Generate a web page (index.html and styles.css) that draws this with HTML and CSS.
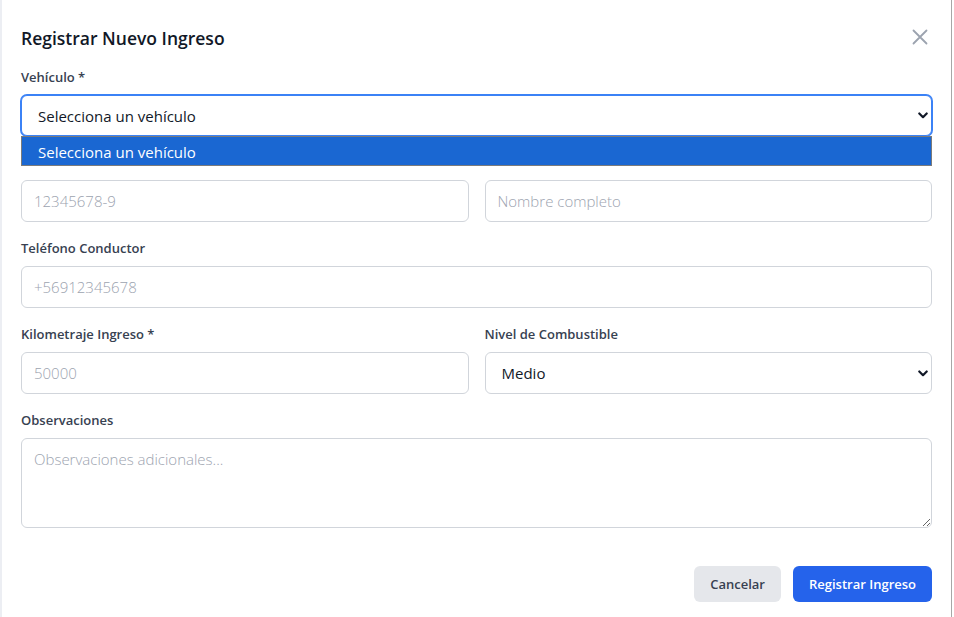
FILE: index.html
```html
<!DOCTYPE html>
<html lang="es">
<head>
<meta charset="utf-8">
<title>Registrar Nuevo Ingreso</title>
<link rel="stylesheet" href="styles.css">
</head>
<body>
<div class="modal">
  <header class="modal-header">
    <h2 class="modal-title">Registrar Nuevo Ingreso</h2>
    <button type="button" class="close-btn" aria-label="Cerrar">
      <svg width="16" height="16" viewBox="0 0 16 16" fill="none" stroke="#9ca3af" stroke-width="1.8" stroke-linecap="round"><path d="M1.5 1.5L14.5 14.5M14.5 1.5L1.5 14.5"/></svg>
    </button>
  </header>
  <form class="modal-body">
    <div class="field field-vehicle">
      <label class="label">Vehículo *</label>
      <div class="select-wrap">
        <select class="control select select-vehicle is-focused"><option>Selecciona un vehículo</option></select>
        <svg class="chevron" width="10" height="7" viewBox="0 0 10 7" fill="none" stroke="#111827" stroke-width="2.2" stroke-linecap="round" stroke-linejoin="round"><path d="M1.3 1.5L5 5.2L8.7 1.5"/></svg>
      </div>
      <div class="dropdown"><div class="dropdown-option">Selecciona un vehículo</div></div>
    </div>
    <div class="row">
      <div class="field">
        <label class="label">RUT Conductor *</label>
        <input class="control" type="text" placeholder="12345678-9">
      </div>
      <div class="field">
        <label class="label">Nombre Conductor *</label>
        <input class="control" type="text" placeholder="Nombre completo">
      </div>
    </div>
    <div class="field">
      <label class="label">Teléfono Conductor</label>
      <input class="control" type="text" placeholder="+56912345678">
    </div>
    <div class="row">
      <div class="field">
        <label class="label">Kilometraje Ingreso *</label>
        <input class="control" type="text" placeholder="50000">
      </div>
      <div class="field">
        <label class="label">Nivel de Combustible</label>
        <div class="select-wrap">
          <select class="control select"><option>Medio</option></select>
          <svg class="chevron" width="10" height="7" viewBox="0 0 10 7" fill="none" stroke="#111827" stroke-width="2.2" stroke-linecap="round" stroke-linejoin="round"><path d="M1.3 1.5L5 5.2L8.7 1.5"/></svg>
        </div>
      </div>
    </div>
    <div class="field">
      <label class="label">Observaciones</label>
      <textarea class="control textarea" placeholder="Observaciones adicionales..."></textarea>
    </div>
    <div class="modal-footer">
      <button type="button" class="btn btn-secondary">Cancelar</button>
      <button type="button" class="btn btn-primary">Registrar Ingreso</button>
    </div>
  </form>
</div>
</body>
</html>
```
FILE: styles.css
```css
* { box-sizing: border-box; }
html, body { margin: 0; padding: 0; background: #ffffff; }
body {
  font-family: "Open Sans", "Noto Sans", sans-serif;
  color: #111827;
}
.modal {
  width: 952px;
  height: 617px;
  border-left: 2px solid #eceef3;
  border-right: 1px solid #a7a7a7;
  background: #ffffff;
  padding: 0 19px;
}
.modal-header {
  display: flex;
  align-items: center;
  justify-content: space-between;
  padding-top: 24px;
}
.modal-title {
  margin: 0;
  font-size: 17.5px;
  line-height: 28px;
  font-weight: 600;
  color: #111827;
}
.close-btn {
  width: 24px;
  height: 24px;
  padding: 0;
  border: 0;
  background: transparent;
  display: flex;
  align-items: center;
  justify-content: center;
  margin-top: -2px;
}
.modal-body {
  display: flex;
  flex-direction: column;
  gap: 16px;
  padding-top: 15px;
}
.field {
  display: flex;
  flex-direction: column;
}
.field-vehicle { position: relative; }
.row {
  display: grid;
  grid-template-columns: 1fr 1fr;
  gap: 16px;
}
.label {
  font-size: 13px;
  line-height: 20px;
  font-weight: 600;
  color: #374151;
  margin-bottom: 8px;
}
.control {
  width: 100%;
  height: 42px;
  border: 1px solid #d1d5db;
  border-radius: 6px;
  padding: 0 12px;
  font-family: "Open Sans", "Noto Sans", sans-serif;
  font-size: 15px;
  color: #111827;
  background: #ffffff;
  outline: none;
}
.control::placeholder { color: #9ca3af; font-weight: 300; }
.select-wrap { position: relative; }
.select {
  appearance: none;
  -webkit-appearance: none;
  padding: 0 30px 0 16px;
}
.select-vehicle { height: 41px; }
.chevron {
  position: absolute;
  right: 4px;
  top: 18px;
  pointer-events: none;
}
.select-vehicle + .chevron { top: 17px; }
.is-focused {
  border-color: #3b82f6;
  box-shadow: 0 0 0 1px #3b82f6;
}
.dropdown {
  position: absolute;
  left: 0;
  right: 0;
  top: 69px;
  height: 30px;
  border: 1px solid #7b7b7b;
  background: #1a67d2;
  box-shadow: 0 7px 0 0 #ffffff;
  z-index: 5;
}
.dropdown-option {
  color: #ffffff;
  font-size: 15px;
  line-height: 28px;
  padding: 1px 0 0 16px;
}
.textarea {
  height: 90px;
  padding: 10px 12px;
  line-height: 20px;
  resize: vertical;
}
.modal-footer {
  display: flex;
  justify-content: flex-end;
  gap: 12px;
  padding-top: 22px;
}
.btn {
  height: 36px;
  padding: 0 16px;
  border: 0;
  border-radius: 6px;
  font-family: "Open Sans", "Noto Sans", sans-serif;
  font-size: 13px;
  font-weight: 600;
}
.btn-secondary { background: #e5e7eb; color: #374151; }
.btn-primary { background: #2563eb; color: #ffffff; }
```
